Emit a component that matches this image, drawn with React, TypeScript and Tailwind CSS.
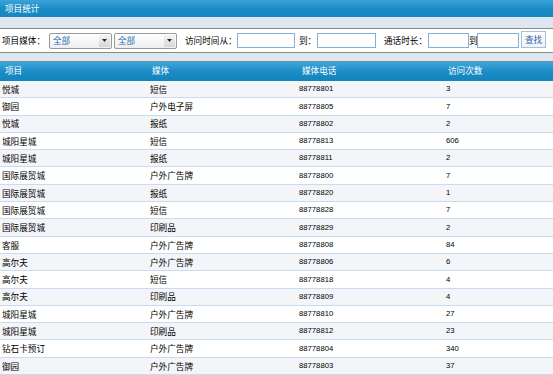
import React from "react";

const rows: [string, string, string, string][] = [
  ["悦城", "短信", "88778801", "3"],
  ["御园", "户外电子屏", "88778805", "7"],
  ["悦城", "报纸", "88778802", "2"],
  ["城阳星城", "短信", "88778813", "606"],
  ["城阳星城", "报纸", "88778811", "2"],
  ["国际展贸城", "户外广告牌", "88778800", "7"],
  ["国际展贸城", "报纸", "88778820", "1"],
  ["国际展贸城", "短信", "88778828", "7"],
  ["国际展贸城", "印刷品", "88778829", "2"],
  ["客服", "户外广告牌", "88778808", "84"],
  ["高尔夫", "户外广告牌", "88778806", "6"],
  ["高尔夫", "短信", "88778818", "4"],
  ["高尔夫", "印刷品", "88778809", "4"],
  ["城阳星城", "户外广告牌", "88778810", "27"],
  ["城阳星城", "印刷品", "88778812", "23"],
  ["钻石卡预订", "户外广告牌", "88778804", "340"],
  ["御园", "户外广告牌", "88778803", "37"],
];

const cjk = { fontFamily: '"Noto Sans CJK SC", sans-serif' };
const num = { fontFamily: '"Liberation Sans", Arial, sans-serif' };

function Select() {
  return (
    <div className="flex h-[16px] w-[63px] items-center rounded-[2px] border border-[#9a9a9a] bg-gradient-to-b from-white to-[#eeeeee]">
      <span className="flex-1 pl-[3px] text-[8.6px] leading-none text-[#1c6cb5]">全部</span>
      <span className="mr-[1px] flex h-[12px] w-[11px] items-center justify-center rounded-[1px] bg-gradient-to-b from-[#f4f4f4] to-[#d6d6d6]">
        <svg width="5" height="3" viewBox="0 0 5 3">
          <path d="M0 0H5L2.5 3Z" fill="#1a2a5a" />
        </svg>
      </span>
    </div>
  );
}

function Input({ w }: { w: string }) {
  return <div className={`h-[15px] border border-[#86aedb] bg-white ${w}`} />;
}

export default function App() {
  return (
    <div className="h-[375px] w-[553px] overflow-hidden bg-white text-black" style={cjk}>
      {/* title bar */}
      <div className="flex h-[17px] items-center bg-gradient-to-b from-[#3aa4d8] via-[#1a8dc6] to-[#1786bf] pl-[5px] text-[8.6px] leading-none text-white">
        项目统计
      </div>
      {/* strip */}
      <div className="h-[12px] border-b border-[#8c8c7e] bg-[#dde6f1]" />
      {/* toolbar */}
      <div className="flex h-[24px] items-center border-b border-[#8c8c7e] bg-white text-[8.6px] leading-none">
        <span className="ml-[2px] w-[47px]">项目媒体：</span>
        <Select />
        <div className="w-[2px]" />
        <Select />
        <span className="ml-[8px] w-[52px]">访问时间从：</span>
        <Input w="w-[58px]" />
        <span className="ml-[4px] w-[18px]">到：</span>
        <Input w="w-[59px]" />
        <span className="ml-[8px] w-[44px]">通话时长：</span>
        <Input w="w-[41px]" />
        <span className="w-[8px]">到</span>
        <Input w="w-[42px]" />
        <div className="ml-[2px] flex h-[17px] w-[25px] -translate-y-[1px] items-center justify-center border border-[#a6bed9] bg-gradient-to-b from-white to-[#eef3f9] text-[8.6px] text-[#2a5fa0]">
          查找
        </div>
      </div>
      {/* strip */}
      <div className="h-[9px] border-b border-[#7d8a96] bg-[#dde6f1]" />
      {/* header */}
      <div className="grid h-[19px] grid-cols-[148px_149px_147px_1fr] items-center bg-gradient-to-b from-[#3ea6d9] via-[#1a8dc6] to-[#1583bc] pb-[3px] text-[8.6px] leading-none text-white">
        <span className="pl-[5px]">项目</span>
        <span className="pl-[4px]">媒体</span>
        <span className="pl-[5px]">媒体电话</span>
        <span className="pl-[4px]">访问次数</span>
      </div>
      {rows.map((r, i) => (
        <div
          key={i}
          className={`grid h-[17.3px] grid-cols-[148px_149px_147px_1fr] items-center border-b border-[#c9dcef] text-[8.6px] leading-none ${
            i % 2 === 0 ? "bg-[#f3f5f8]" : "bg-white"
          }`}
        >
          <span className="pl-[2px]">{r[0]}</span>
          <span className="pl-[2px]">{r[1]}</span>
          <span className="pl-[2px] text-[7.7px]" style={num}>{r[2]}</span>
          <span className="pl-[2px] text-[7.7px]" style={num}>{r[3]}</span>
        </div>
      ))}
    </div>
  );
}
